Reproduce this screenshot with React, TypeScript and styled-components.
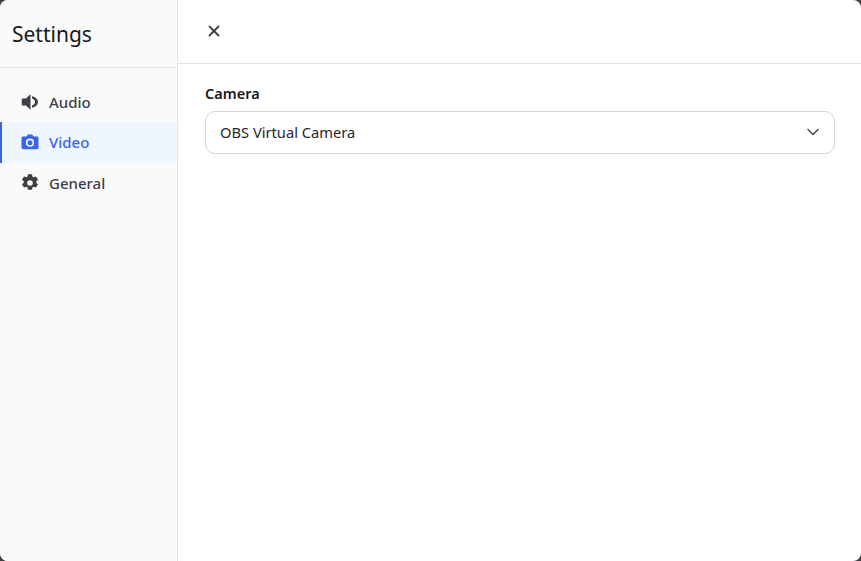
import React from 'react'
import styled, { createGlobalStyle } from 'styled-components'
import { X, ChevronDown } from 'lucide-react'

const SpeakerIcon = () => (
  <svg width="18" height="18" viewBox="0 0 18 18" fill="currentColor">
    <path d="M9.500 1.200v15.600L4.900 12.600H1.700C1 12.600.8 12.200.8 11.700V6.300c0-.5.2-.9.900-.9h3.200z" />
    <path d="M11 3.200c3 .6 6 2.700 6 5.800s-3 5.200-6 5.800v-2.300c1.500-.5 3-1.700 3-3.500s-1.500-3-3-3.500z" />
  </svg>
)

const CameraIcon = () => (
  <svg width="18" height="18" viewBox="0 0 18 18">
    <path
      fill="currentColor"
      d="M2.200 3.600h3.300l1-1.700c.2-.3.4-.4.800-.4h3.400c.4 0 .6.100.8.400l1 1.700h3.300c1 0 1.700.7 1.700 1.700v9.300c0 1-.7 1.700-1.700 1.700H2.200c-1 0-1.700-.7-1.700-1.700V5.300c0-1 .7-1.700 1.700-1.700z"
    />
    <circle cx="9" cy="9.700" r="3.300" fill="none" stroke="#eff6ff" strokeWidth="1.600" />
  </svg>
)

const GearIcon = () => (
  <svg width="18" height="18" viewBox="0 0 18 18">
    <path
      fill="currentColor"
      fillRule="evenodd"
      d="M7 .2h4l.5 2.500 1.100.6 2.400-.9 2 3.400-1.900 1.700v1l1.900 1.700-2 3.400-2.400-.9-1.100.6-.5 2.500H7l-.5-2.500-1.100-.6-2.400.9-2-3.400 1.900-1.700v-1L1 5.800l2-3.400 2.400.9 1.100-.6zM9 6.200a2.800 2.800 0 1 0 0 5.600 2.800 2.800 0 0 0 0-5.600z"
    />
  </svg>
)

const App = () => {
  return (
    <>
      <Global />
      <Backdrop>
        <Dialog>
          <Sidebar>
            <Title>Settings</Title>
            <Nav>
              <NavItem>
                <NavIcon><SpeakerIcon /></NavIcon>
                Audio
              </NavItem>
              <NavItem $active>
                <NavIcon><CameraIcon /></NavIcon>
                Video
              </NavItem>
              <NavItem>
                <NavIcon><GearIcon /></NavIcon>
                General
              </NavItem>
            </Nav>
          </Sidebar>
          <Main>
            <TopBar>
              <CloseButton><X size={18} strokeWidth={2.4} /></CloseButton>
            </TopBar>
            <Content>
              <Label>Camera</Label>
              <Select>
                OBS Virtual Camera
                <ChevronDown size={20} strokeWidth={2} color="#52525b" />
              </Select>
            </Content>
          </Main>
        </Dialog>
      </Backdrop>
    </>
  )
}

export default App

const Global = createGlobalStyle`
html, body {
  margin: 0;
  padding: 0;
  width: 861px;
  height: 561px;
  overflow: hidden;
}
* {
  box-sizing: border-box;
}
`

const Backdrop = styled.div`
width: 861px;
height: 561px;
background-color: #3f3f46;
font-family: "Noto Sans", "Open Sans", sans-serif;
`

const Dialog = styled.div`
width: 100%;
height: 100%;
display: flex;
background-color: white;
border-radius: 8px;
overflow: hidden;
`

const Sidebar = styled.div`
width: 178px;
display: flex;
flex-direction: column;
background-color: #fafafa;
border-right: 1px solid #e4e4e7;
`

const Title = styled.div`
height: 68px;
padding-left: 12px;
display: flex;
align-items: center;
font-size: 21px;
color: #18181b;
border-bottom: 1px solid #e4e4e7;
`

const Nav = styled.div`
display: flex;
flex-direction: column;
padding-top: 13.5px;
`

const NavItem = styled.div<{ $active?: boolean }>`
height: 40.5px;
display: flex;
align-items: center;
padding-left: 21px;
gap: 10px;
font-size: 15px;
font-weight: 500;
color: ${(p) => (p.$active ? '#3b63e8' : '#3f3f46')};
background-color: ${(p) => (p.$active ? '#eff6ff' : 'transparent')};
box-shadow: ${(p) => (p.$active ? 'inset 2px 0 0 #3b63e8' : 'none')};
`

const NavIcon = styled.span`
width: 18px;
display: flex;
justify-content: center;
align-items: center;
`

const Main = styled.div`
flex: 1;
display: flex;
flex-direction: column;
`

const TopBar = styled.div`
height: 64px;
padding: 0 0 2px 27px;
display: flex;
align-items: center;
border-bottom: 1px solid #e4e4e7;
`

const CloseButton = styled.div`
display: flex;
color: #3f3f46;
`

const Content = styled.div`
padding: 19px 26px 0 27px;
display: flex;
flex-direction: column;
gap: 7px;
`

const Label = styled.div`
font-size: 14.5px;
font-weight: 600;
line-height: 21px;
color: #18181b;
`

const Select = styled.div`
height: 43px;
display: flex;
align-items: center;
justify-content: space-between;
padding: 0 11px 1px 14px;
border: 1px solid #d4d4d8;
border-radius: 10px;
font-size: 14.7px;
color: #27272a;
`
